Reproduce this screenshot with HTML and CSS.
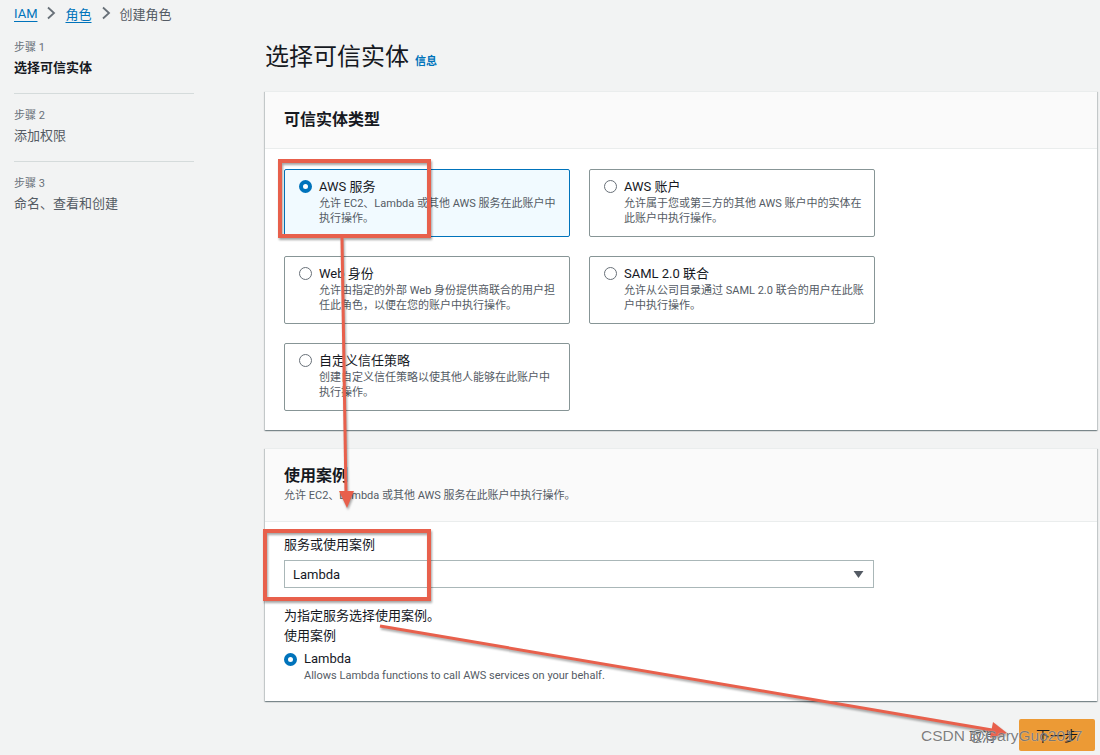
FILE: index.html
```html
<!DOCTYPE html>
<html lang="zh-CN">
<head>
    <meta charset="UTF-8">
    <title>创建角色 | IAM</title>
    <link rel="stylesheet" href="styles.css">
</head>
<body>
    <div class="page">
        <nav class="crumbs">
            <a href="#">IAM</a>
            <svg class="chev" viewBox="0 0 10 14" width="10" height="14"><path d="M2 1.5 L8 7 L2 12.5" fill="none" stroke="#687078" stroke-width="1.8"/></svg>
            <a href="#">角色</a>
            <svg class="chev" viewBox="0 0 10 14" width="10" height="14"><path d="M2 1.5 L8 7 L2 12.5" fill="none" stroke="#687078" stroke-width="1.8"/></svg>
            <span class="current">创建角色</span>
        </nav>

        <div class="layout">
            <aside class="steps">
                <div class="step">
                    <div class="step-num">步骤 1</div>
                    <div class="step-name active">选择可信实体</div>
                </div>
                <div class="step">
                    <div class="step-num">步骤 2</div>
                    <div class="step-name">添加权限</div>
                </div>
                <div class="step">
                    <div class="step-num">步骤 3</div>
                    <div class="step-name">命名、查看和创建</div>
                </div>
            </aside>

            <main class="content">
                <h1 class="title">选择可信实体 <a class="info" href="#">信息</a></h1>

                <section class="card">
                    <header class="card-head">
                        <h2>可信实体类型</h2>
                    </header>
                    <div class="card-body tiles">
                        <label class="tile selected">
                            <span class="radio checked"></span>
                            <span class="tile-text">
                                <span class="tile-title">AWS 服务</span>
                                <span class="tile-desc">允许 EC2、Lambda 或其他 AWS 服务在此账户中<br>执行操作。</span>
                            </span>
                        </label>
                        <label class="tile">
                            <span class="radio"></span>
                            <span class="tile-text">
                                <span class="tile-title">AWS 账户</span>
                                <span class="tile-desc">允许属于您或第三方的其他 AWS 账户中的实体在<br>此账户中执行操作。</span>
                            </span>
                        </label>
                        <label class="tile">
                            <span class="radio"></span>
                            <span class="tile-text">
                                <span class="tile-title">Web 身份</span>
                                <span class="tile-desc">允许由指定的外部 Web 身份提供商联合的用户担<br>任此角色，以便在您的账户中执行操作。</span>
                            </span>
                        </label>
                        <label class="tile">
                            <span class="radio"></span>
                            <span class="tile-text">
                                <span class="tile-title">SAML 2.0 联合</span>
                                <span class="tile-desc">允许从公司目录通过 SAML 2.0 联合的用户在此账<br>户中执行操作。</span>
                            </span>
                        </label>
                        <label class="tile">
                            <span class="radio"></span>
                            <span class="tile-text">
                                <span class="tile-title">自定义信任策略</span>
                                <span class="tile-desc">创建自定义信任策略以使其他人能够在此账户中<br>执行操作。</span>
                            </span>
                        </label>
                    </div>
                </section>

                <section class="card">
                    <header class="card-head tall">
                        <h2>使用案例</h2>
                        <p class="card-desc">允许 EC2、Lambda 或其他 AWS 服务在此账户中执行操作。</p>
                    </header>
                    <div class="card-body usecase">
                        <div class="field-label">服务或使用案例</div>
                        <div class="select">
                            <span>Lambda</span>
                            <svg viewBox="0 0 12 10" width="11" height="9"><path d="M0.5 1 L11.5 1 L6 9 Z" fill="#545b64"/></svg>
                        </div>
                        <p class="hint">为指定服务选择使用案例。</p>
                        <p class="sub-label">使用案例</p>
                        <label class="option">
                            <span class="radio checked"></span>
                            <span class="tile-text">
                                <span class="option-title">Lambda</span>
                                <span class="option-desc">Allows Lambda functions to call AWS services on your behalf.</span>
                            </span>
                        </label>
                    </div>
                </section>

                <div class="actions">
                    <button class="btn-link">取消</button>
                    <button class="btn-primary">下一步</button>
                </div>
            </main>
        </div>

        <!-- annotations drawn over the screenshot -->
        <svg class="marks" viewBox="0 0 1100 755" width="1100" height="755">
            <g fill="none" stroke="#e8604c" stroke-width="4">
                <rect x="280" y="161" width="149" height="75"/>
                <rect x="265" y="531" width="164" height="68"/>
            </g>
            <g stroke="#e8604c" stroke-width="3" fill="#e8604c">
                <path d="M342 238 L346 494" fill="none"/>
                <polygon points="347,508 339,491 354,491" stroke="none"/>
                <path d="M380 626 L992 730" fill="none"/>
                <polygon points="1007,733 990,738 993,722" stroke="none"/>
            </g>
        </svg>
        <div class="watermark">CSDN @GaryGuo2017</div>
    </div>
</body>
</html>
```

FILE: styles.css
```css
body {
    margin: 0;
    background: #f2f3f3;
    font-family: Roboto, "Noto Sans CJK SC", sans-serif;
    color: #16191f;
}
.page {
    position: relative;
    width: 1100px;
    height: 755px;
    overflow: hidden;
}
.crumbs {
    display: flex;
    align-items: center;
    gap: 9px;
    height: 26px;
    padding-left: 14px;
    font-size: 13px;
}
.crumbs a {
    color: #0073bb;
    text-decoration: underline;
    text-underline-offset: 3px;
}
.crumbs .current {
    color: #545b64;
}
.layout {
    display: flex;
}
.steps {
    width: 180px;
    margin: 14px 71px 0 14px;
}
.step {
    padding: 14px 0 15px;
    border-bottom: 1px solid #d5dbdb;
}
.step:first-child {
    padding-top: 0;
}
.step:last-child {
    border-bottom: none;
}
.step-num {
    font-size: 11px;
    line-height: 16px;
    color: #687078;
}
.step-name {
    margin-top: 2px;
    font-size: 13px;
    line-height: 20px;
    color: #545b64;
}
.step-name.active {
    font-weight: bold;
    color: #16191f;
}
.content {
    width: 832px;
}
.title {
    display: flex;
    align-items: baseline;
    gap: 6px;
    height: 32px;
    margin: 15px 0 18px;
    font-size: 24px;
    line-height: 32px;
    font-weight: normal;
}
.info {
    font-size: 11px;
    line-height: 16px;
    font-weight: bold;
    color: #0073bb;
    text-decoration: none;
}
.card {
    background: #fff;
    box-shadow: 0 1px 1px 0 rgba(0, 28, 36, 0.3), 1px 1px 1px 0 rgba(0, 28, 36, 0.15), -1px 1px 1px 0 rgba(0, 28, 36, 0.15);
    border-top: 1px solid #eaeded;
    margin-bottom: 18px;
}
.card-head {
    background: #fafafa;
    border-bottom: 1px solid #eaeded;
    height: 56px;
    padding: 0 19px;
    display: flex;
    flex-direction: column;
    justify-content: center;
}
.card-head.tall {
    height: 72px;
}
.card-head h2 {
    margin: 0;
    font-size: 16px;
    line-height: 20px;
}
.card-desc {
    margin: 2px 0 0;
    font-size: 11px;
    line-height: 16px;
    color: #545b64;
}
.card-body {
    padding: 20px 19px 19px;
}
.tiles {
    display: grid;
    grid-template-columns: 286px 286px;
    gap: 19px;
}
.tile {
    display: flex;
    gap: 7px;
    height: 68px;
    box-sizing: border-box;
    padding: 9px 14px 9px 14px;
    border: 1px solid #879596;
    border-radius: 2px;
}
.tile.selected {
    background: #f1faff;
    border-color: #0073bb;
}
.radio {
    flex: none;
    width: 13px;
    height: 13px;
    margin-top: 1px;
    box-sizing: border-box;
    border: 1px solid #687078;
    border-radius: 50%;
    background: #fff;
}
.radio.checked {
    border: 4px solid #0073bb;
}
.tile-text {
    display: flex;
    flex-direction: column;
}
.tile-title {
    font-size: 13px;
    line-height: 16px;
    margin-bottom: 1px;
}
.tile-desc {
    font-size: 11px;
    line-height: 15px;
    color: #545b64;
    white-space: nowrap;
}
.usecase {
    padding: 14px 19px 17px;
}
.field-label {
    font-size: 13px;
    line-height: 18px;
}
.select {
    width: 590px;
    height: 28px;
    box-sizing: border-box;
    margin-top: 6px;
    padding: 0 9px 0 8px;
    border: 1px solid #aab7b8;
    display: flex;
    align-items: center;
    justify-content: space-between;
    font-size: 13px;
}
.hint, .sub-label {
    margin: 0;
    font-size: 13px;
    line-height: 20px;
}
.hint {
    margin-top: 18px;
}
.option {
    display: flex;
    gap: 7px;
    margin-top: 4px;
}
.option .radio {
    margin-top: 3px;
}
.option-title {
    font-size: 13px;
    line-height: 18px;
}
.option-desc {
    font-size: 11px;
    line-height: 16px;
    color: #545b64;
}
.actions {
    display: flex;
    justify-content: flex-end;
    align-items: center;
    gap: 12px;
    padding-right: 2px;
}
.btn-link {
    background: none;
    border: none;
    padding: 0 12px;
    font-family: inherit;
    font-size: 13px;
    color: #545b64;
}
.btn-primary {
    width: 76px;
    height: 32px;
    border: none;
    border-radius: 2px;
    background: #ec9a35;
    font-family: inherit;
    font-size: 14px;
    color: #16191f;
}
.marks {
    position: absolute;
    top: 0;
    left: 0;
    pointer-events: none;
    filter: drop-shadow(1px 2px 1px rgba(0, 0, 0, 0.35));
}
.watermark {
    position: absolute;
    left: 921px;
    top: 727px;
    font-family: "Liberation Sans", "Noto Sans CJK SC", sans-serif;
    font-size: 15.5px;
    color: rgba(70, 70, 70, 0.7);
    text-shadow: 0 0 1px rgba(255, 255, 255, 0.9);
    white-space: nowrap;
}
```
